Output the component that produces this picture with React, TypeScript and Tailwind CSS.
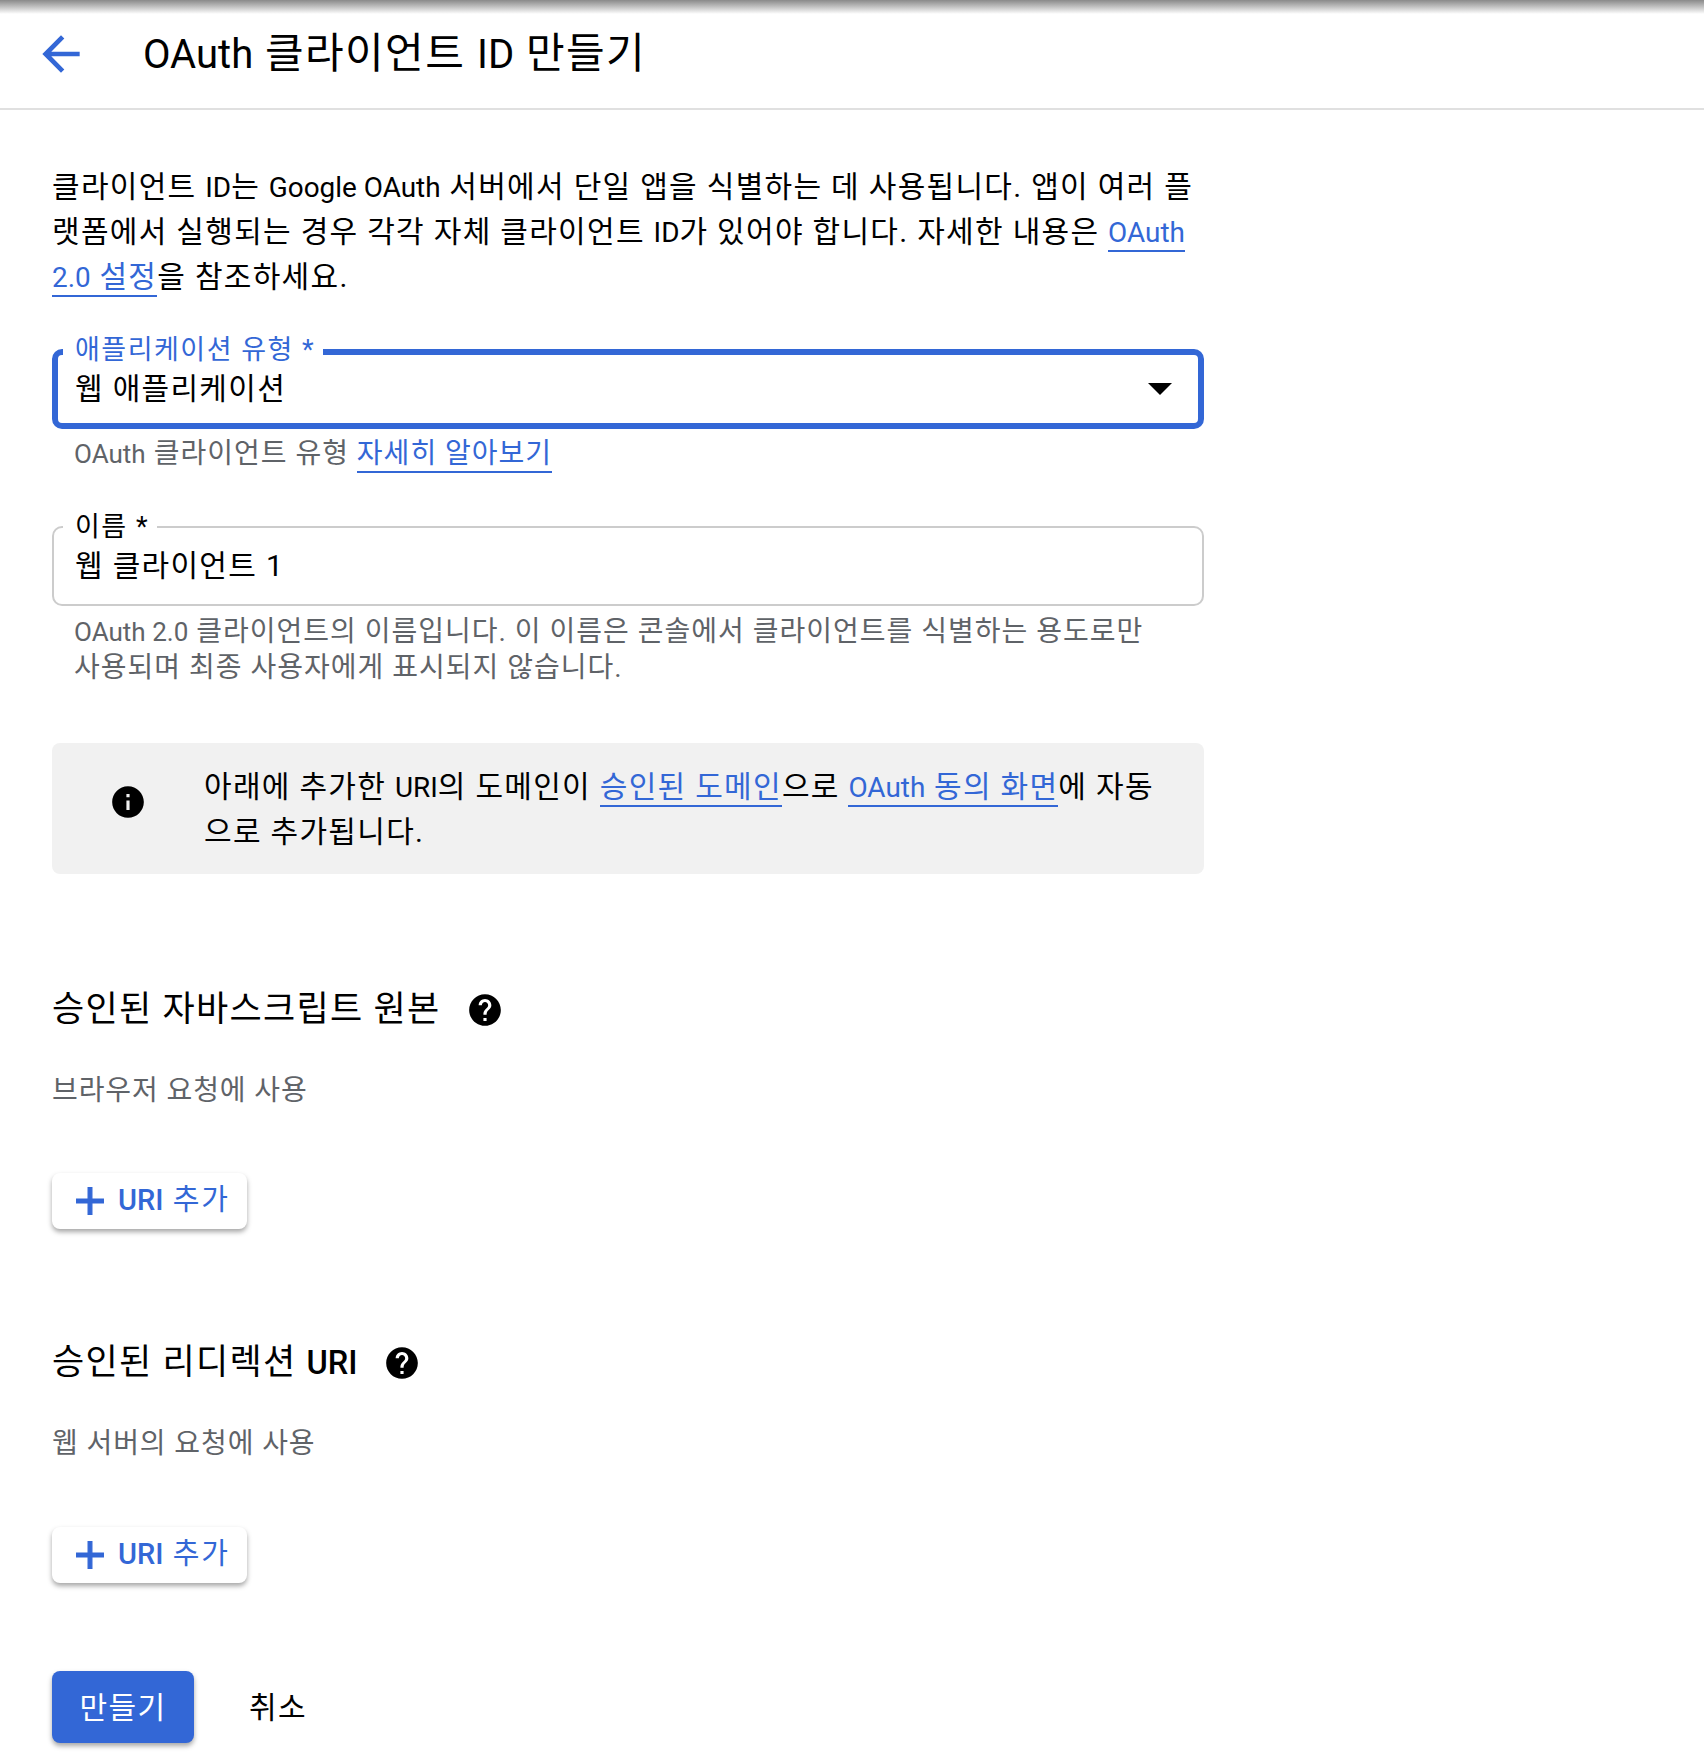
import React from "react";

const BLUE = "text-[#3367d6]";

function Icon({ d, className }: { d: string; className: string }) {
  return (
    <svg viewBox="0 0 24 24" fill="currentColor" className={className}>
      <path d={d} />
    </svg>
  );
}

const ARROW = "M20 11H7.83l5.59-5.59L12 4l-8 8 8 8 1.41-1.41L7.83 13H20v-2z";
const INFO = "M12 2C6.48 2 2 6.48 2 12s4.48 10 10 10 10-4.48 10-10S17.52 2 12 2zm1 15h-2v-6h2v6zm0-8h-2V7h2v2z";
const HELP = "M12 2C6.48 2 2 6.48 2 12s4.48 10 10 10 10-4.48 10-10S17.52 2 12 2zm1 17h-2v-2h2v2zm2.07-7.75l-.9.92C13.45 12.9 13 13.5 13 15h-2v-.5c0-1.1.45-2.1 1.17-2.83l1.24-1.26c.37-.36.59-.86.59-1.41 0-1.1-.9-2-2-2s-2 .9-2 2H8c0-2.21 1.79-4 4-4s4 1.79 4 4c0 .88-.36 1.68-.93 2.25z";
const ADD = "M19 13h-6v6h-2v-6H5v-2h6V5h2v6h6v2z";

function A({ children }: { children: React.ReactNode }) {
  return <a className={`${BLUE} border-b-2 border-[#3367d6] pb-px`}>{children}</a>;
}

// latin runs sit a bit smaller and tighter than the hangul around them
function L({ children, className = "" }: { children: React.ReactNode; className?: string }) {
  return <span className={`text-[0.93em] leading-none tracking-normal ${className}`}>{children}</span>;
}

function AddButton() {
  return (
    <button className={`flex h-14 w-[195px] items-center rounded-lg bg-white pl-[15px] text-[29px] ${BLUE} shadow-[0_3px_5px_rgba(0,0,0,0.35)]`}>
      <Icon d={ADD} className="h-[46px] w-[46px] shrink-0 stroke-current stroke-[0.6]" />
      <span className="ml-[5px] whitespace-nowrap tracking-[2px]">
        <span className="font-medium tracking-normal">URI</span> 추가
      </span>
    </button>
  );
}

export default function App() {
  return (
    <div className="min-h-[1763px] bg-white font-['Roboto','Noto_Sans_CJK_KR',sans-serif] text-black">
      <div className="h-[14px] bg-gradient-to-b from-[#8a8a8a] to-white" />
      <header className="flex h-[96px] items-center border-b-2 border-[#e0e0e0] pb-[14px]">
        <Icon d={ARROW} className={`ml-[33px] h-[56px] w-[56px] ${BLUE}`} />
        <h1 className="ml-[54px] text-[42px] leading-none tracking-[1.4px]">
          <span className="text-[40px] tracking-normal">OAuth</span> 클라이언트 <span className="text-[40px] tracking-normal">ID</span> 만들기
        </h1>
      </header>

      <main className="w-[1204px] pl-[52px]">
        <p className="mt-[54px] text-[30px] leading-[45px] tracking-[1.3px]">
          클라이언트 <L>ID</L>는 <L>Google OAuth</L> 서버에서 단일 앱을 식별하는 데 사용됩니다. 앱이 여러 플랫폼에서 실행되는 경우 각각 자체 클라이언트 <L>ID</L>가 있어야 합니다. 자세한 내용은 <A><L>OAuth 2.0</L> 설정</A>을 참조하세요.
        </p>

        <div className="relative mt-[50px] flex h-[80px] items-center justify-between rounded-[10px] border-[6px] border-[#3367d6] pl-[17px] pr-[26px]">
          <span className="absolute left-[5px] top-[-23px] bg-white pl-[12px] pr-[8px] text-[27px] leading-[36px] tracking-[1.5px] text-[#3367d6]">애플리케이션 유형 *</span>
          <span className="pb-[2px] text-[30px] tracking-[1.3px]">웹 애플리케이션</span>
          <div className="h-0 w-0 border-x-[12px] border-t-[12px] border-x-transparent border-t-black" />
        </div>
        <p className="mt-[7px] pl-[22px] text-[28px] leading-[36px] tracking-[1px] text-[#5f6368]">
          <L>OAuth</L> 클라이언트 유형 <A>자세히 알아보기</A>
        </p>

        <div className="relative mt-[54px] flex h-[80px] items-center rounded-[10px] border-2 border-[#cccccc] pl-[21px]">
          <span className="absolute left-[9px] top-[-19px] bg-white pl-[12px] pr-[8px] text-[27px] leading-[36px] tracking-[1.5px]">이름 *</span>
          <span className="pb-[2px] text-[30px] tracking-[1.3px]">웹 클라이언트 1</span>
        </div>
        <p className="mt-[8px] pl-[22px] pr-[40px] text-[28px] leading-[36px] tracking-[1px] text-[#5f6368]">
          <L>OAuth 2.0</L> 클라이언트의 이름입니다. 이 이름은 콘솔에서 클라이언트를 식별하는 용도로만 사용되며 최종 사용자에게 표시되지 않습니다.
        </p>

        <div className="mt-[57px] flex h-[131px] items-start rounded-lg bg-[#f1f1f1] pl-[57px] pr-[40px] pt-[21px]">
          <Icon d={INFO} className="mt-[19px] h-[38px] w-[38px] shrink-0" />
          <p className="ml-[57px] text-[30px] leading-[45px] tracking-[1.3px]">
            아래에 추가한 <L>URI</L>의 도메인이 <A>승인된 도메인</A>으로 <A><L>OAuth</L> 동의 화면</A>에 자동으로 추가됩니다.
          </p>
        </div>

        <div className="mt-[109px] flex items-center">
          <h2 className="text-[35px] leading-[54px] tracking-[1.3px]">승인된 자바스크립트 원본</h2>
          <Icon d={HELP} className="ml-[26px] h-[38px] w-[38px]" />
        </div>
        <p className="mt-[36px] text-[28px] leading-[36px] tracking-[0.9px] text-[#5f6368]">브라우저 요청에 사용</p>
        <div className="mt-[64px]">
          <AddButton />
        </div>

        <div className="mt-[107px] flex items-center">
          <h2 className="text-[35px] leading-[54px] tracking-[1.3px]">
            승인된 리디렉션 <L className="font-medium">URI</L>
          </h2>
          <Icon d={HELP} className="ml-[26px] h-[38px] w-[38px]" />
        </div>
        <p className="mt-[36px] text-[28px] leading-[36px] tracking-[0.9px] text-[#5f6368]">웹 서버의 요청에 사용</p>
        <div className="mt-[65px]">
          <AddButton />
        </div>

        <div className="mt-[88px] flex items-center">
          <button className="h-[72px] w-[142px] rounded-lg bg-[#3367d6] text-[30px] tracking-[1.4px] text-white shadow-[0_3px_5px_rgba(0,0,0,0.35)]">만들기</button>
          <button className="ml-[55px] text-[30px] tracking-[1.4px]">취소</button>
        </div>
      </main>
    </div>
  );
}
